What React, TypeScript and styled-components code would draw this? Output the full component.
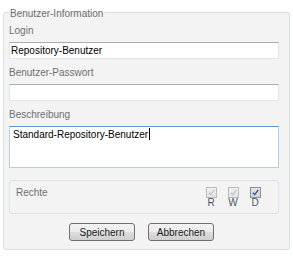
import * as React from 'react';
import styled, { createGlobalStyle } from 'styled-components';

const GlobalStyles = createGlobalStyle`
  html, body {
    margin: 0;
    padding: 0;
    background: #ffffff;
  }
  body {
    font-family: 'Liberation Sans', Arial, sans-serif;
    font-size: 10px;
    color: #000000;
  }
`;

const Page = styled.div`
  width: 293px;
  box-sizing: border-box;
  padding: 4px 3px 0 3px;
`;

const Group = styled.fieldset`
  margin: 0;
  padding: 0 10px 8px 5px;
  border: 1px solid #d6dee6;
  border-radius: 3px;
  background: #f3f3f3;
  display: flex;
  flex-direction: column;
  min-width: 0;
`;

const Legend = styled.legend`
  padding: 3px 1px 0;
  line-height: 14px;
  color: #6e6e6e;
`;

const Label = styled.div<{ $first?: boolean }>`
  margin-top: ${({ $first }) => ($first ? '3px' : '7px')};
  margin-bottom: 4px;
  line-height: 14px;
  color: #707070;
`;

const TextInput = styled.input`
  box-sizing: border-box;
  width: 100%;
  height: 17px;
  margin: 0;
  padding: 0 1px;
  border: 1px solid #e2e3ea;
  border-top-color: #abadb3;
  background: #ffffff;
  font: inherit;
  color: #000000;
  outline: none;
`;

const TextArea = styled.div`
  box-sizing: border-box;
  height: 42px;
  padding: 1px 3px;
  border: 1px solid #b5cfe7;
  border-top-color: #5f96cc;
  background: #ffffff;
  line-height: 14px;
  color: #000000;
`;

const Caret = styled.span`
  display: inline-block;
  width: 1px;
  height: 12px;
  margin-left: 1px;
  vertical-align: -2px;
  background: #000000;
`;

const Rights = styled.div`
  margin-top: 12px;
  height: 34px;
  box-sizing: border-box;
  border: 1px solid #dce3ea;
  border-radius: 3px;
  padding: 5px 12px 0 6px;
  display: flex;
  justify-content: space-between;
  align-items: flex-start;
`;

const RightsLabel = styled.span`
  line-height: 14px;
  color: #707070;
`;

const Checks = styled.div`
  display: flex;
  margin-top: 1px;
`;

const CheckColumn = styled.div`
  width: 22px;
  display: flex;
  flex-direction: column;
  align-items: center;
`;

const Box = styled.span<{ $active?: boolean }>`
  box-sizing: border-box;
  width: 11px;
  height: 11px;
  display: flex;
  align-items: center;
  justify-content: center;
  border: 1px solid ${({ $active }) => ($active ? '#8e8f8f' : '#bcbcbc')};
  background: ${({ $active }) =>
    $active
      ? 'linear-gradient(#e4e4e4, #cfd2d6)'
      : 'linear-gradient(#f0f0f0, #e3e3e3)'};
`;

const Letter = styled.span<{ $active?: boolean }>`
  line-height: 9px;
  color: #4b5468;
`;

const ButtonRow = styled.div`
  margin-top: 9px;
  padding-right: 5px;
  display: flex;
  justify-content: center;
  gap: 13px;
`;

const Button = styled.button`
  box-sizing: border-box;
  width: 66px;
  height: 18px;
  margin: 0;
  padding: 0;
  border: 1px solid #707070;
  border-radius: 3px;
  background: linear-gradient(#f3f3f3, #ebebeb 50%, #dddddd 51%, #cfcfcf);
  font: inherit;
  color: #1a1a1a;
`;

const Check = ({ active }: { active?: boolean }) => (
  <svg width="7" height="7" viewBox="0 0 7 7">
    <path
      d="M0.8 3.6 L2.7 5.6 L6.3 0.8"
      fill="none"
      stroke={active ? '#2a4c9c' : '#c3c3c3'}
      strokeWidth="1.3"
    />
  </svg>
);

const rights = [
  { key: 'R', active: false },
  { key: 'W', active: false },
  { key: 'D', active: true },
];

const App = () => (
  <Page>
    <GlobalStyles />
    <Group>
      <Legend>Benutzer-Information</Legend>
      <Label $first>Login</Label>
      <TextInput defaultValue="Repository-Benutzer" />
      <Label>Benutzer-Passwort</Label>
      <TextInput type="password" defaultValue="" />
      <Label>Beschreibung</Label>
      <TextArea>
        Standard-Repository-Benutzer
        <Caret />
      </TextArea>
      <Rights>
        <RightsLabel>Rechte</RightsLabel>
        <Checks>
          {rights.map((r) => (
            <CheckColumn key={r.key}>
              <Box $active={r.active}>
                <Check active={r.active} />
              </Box>
              <Letter>{r.key}</Letter>
            </CheckColumn>
          ))}
        </Checks>
      </Rights>
      <ButtonRow>
        <Button>Speichern</Button>
        <Button>Abbrechen</Button>
      </ButtonRow>
    </Group>
  </Page>
);

export default App;
